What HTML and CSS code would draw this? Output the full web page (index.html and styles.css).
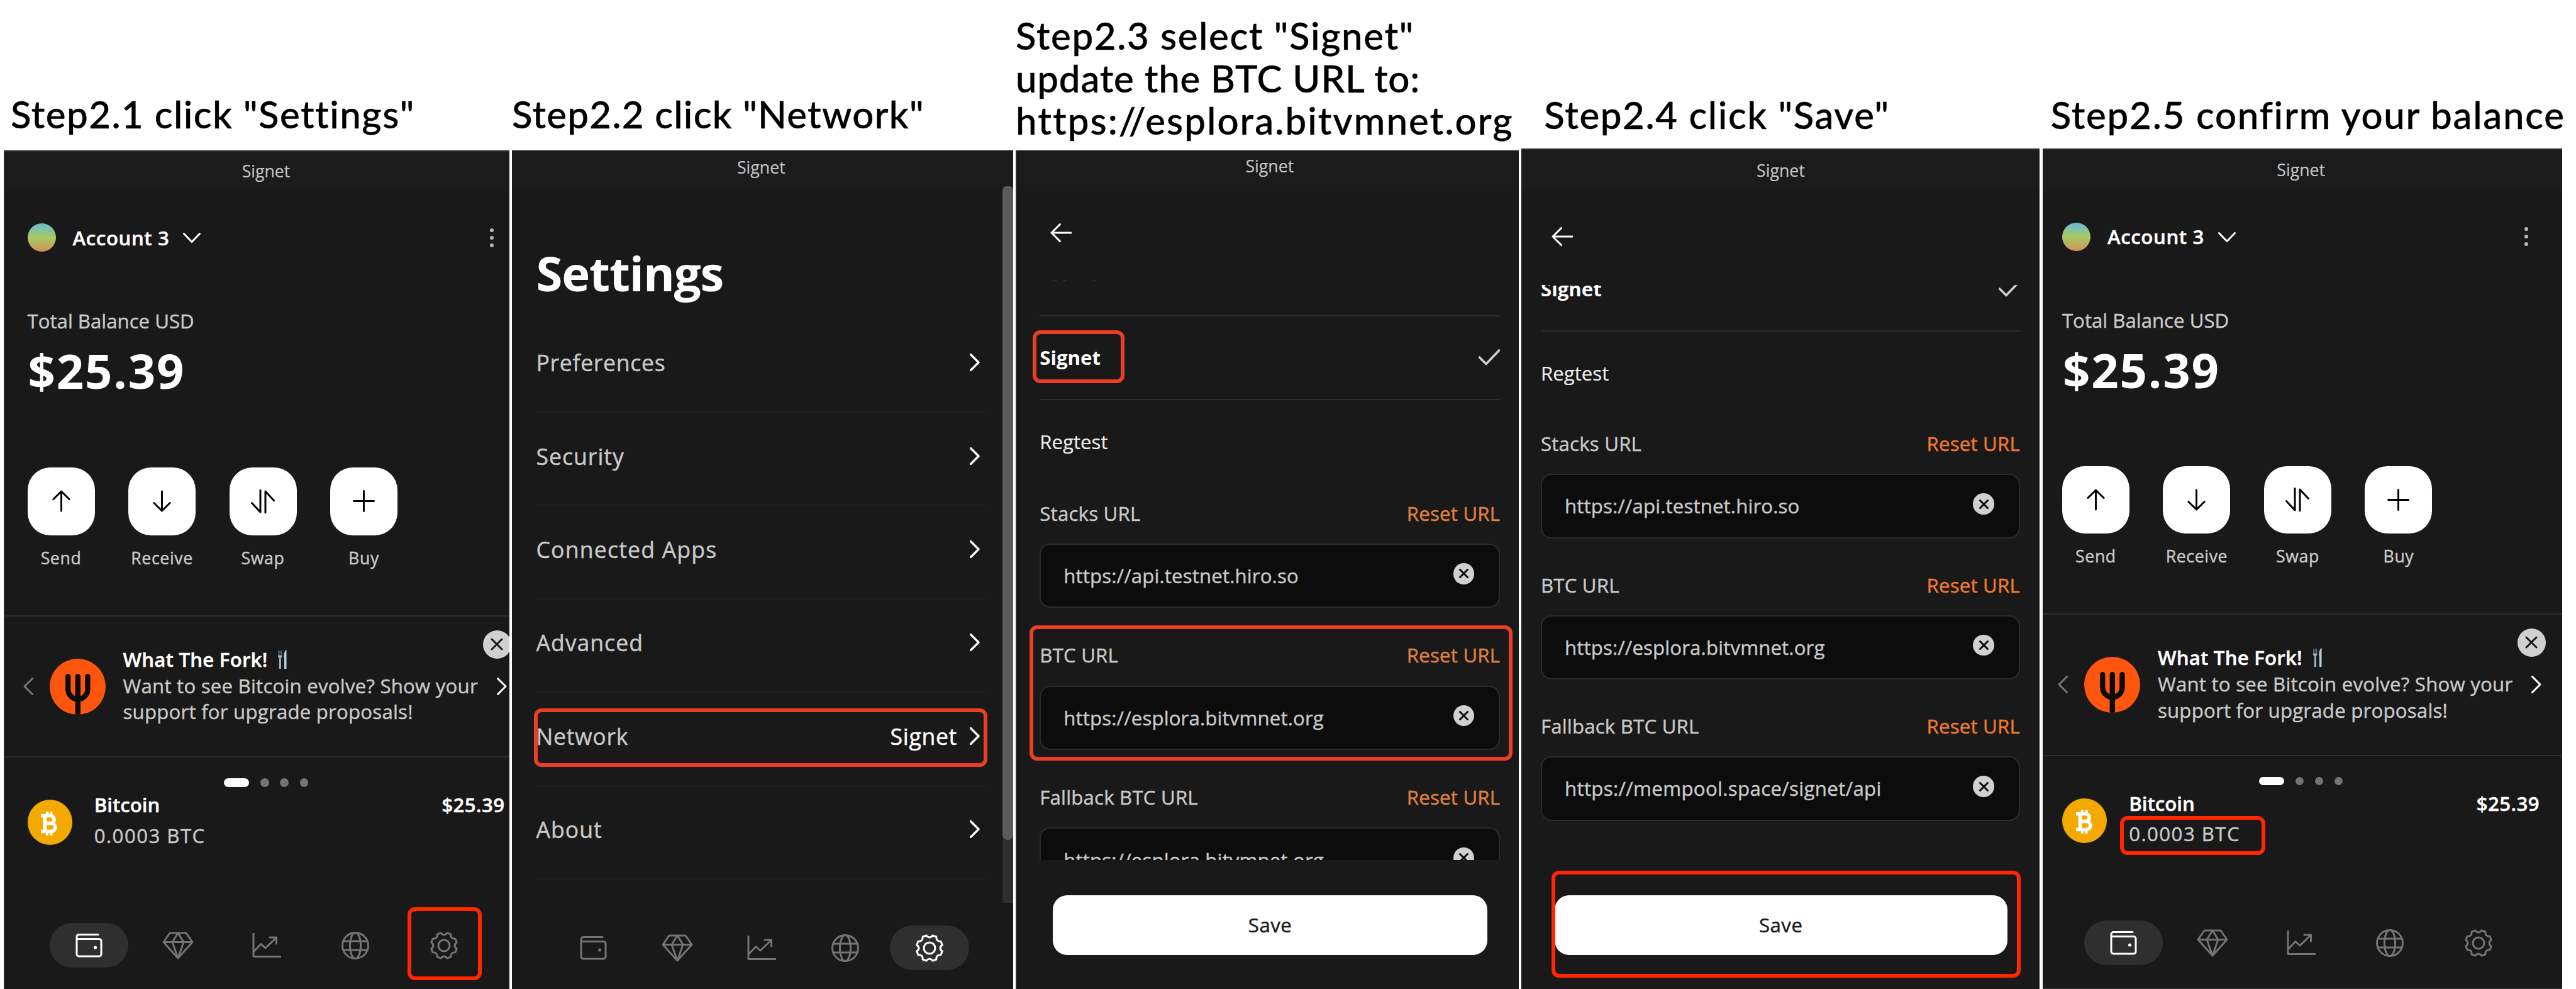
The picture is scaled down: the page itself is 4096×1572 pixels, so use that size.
FILE: index.html
```html
<!DOCTYPE html>
<html lang="en">
<head>
<meta charset="utf-8">
<title>Wallet network setup</title>
<link rel="stylesheet" href="styles.css">
</head>
<body>
<svg class="sprite" aria-hidden="true">
  <symbol id="i-wallet" viewBox="0 0 43 38"><path d="M36 2H5.5A3.5 3.5 0 0 0 2 5.500V33A3.500 3.500 0 0 0 5.500 36.500H37.500A3.500 3.500 0 0 0 41 33V12.500A3.500 3.500 0 0 0 37.500 9H2"/><circle class="solid" cx="31.500" cy="22.500" r="2.600"/></symbol>
  <symbol id="i-gem" viewBox="0 0 50 44"><path d="M12 2H38L48 16.500L25 42L2 16.500ZM2 16.500H48M25 2L16 16.500L25 42L34 16.500Z"/></symbol>
  <symbol id="i-chart" viewBox="0 0 46 40"><path d="M2 1V37.500H45M3 29L14 17.500L21 24L38 7.500M28 7H38.500V17"/></symbol>
  <symbol id="i-globe" viewBox="-23 -23 46 46"><circle r="20.500"/><ellipse rx="8.600" ry="20.500"/><path d="M-19 -7H19M-19 7H19"/></symbol>
  <symbol id="i-gear" viewBox="-23 -23 46 46"><path d="M20.200 5L18 10.800Q10.400 10.400 10.800 18L5 20.200Q0 13.800 -5 20.200L-10.800 18Q-10.400 10.400 -18 10.800L-20.200 5Q-13.800 0 -20.200 -5L-18 -10.800Q-10.400 -10.400 -10.800 -18L-5 -20.200Q0 -13.800 5 -20.200L10.800 -18Q10.400 -10.400 18 -10.800L20.200 -5Q13.800 0 20.200 5Z"/><circle r="9"/></symbol>
  <symbol id="i-up" viewBox="0 0 36 36"><path d="M18 34V2M5 15L18 2L31 15"/></symbol>
  <symbol id="i-down" viewBox="0 0 36 36"><path d="M18 2V34M5 21L18 34L31 21"/></symbol>
  <symbol id="i-swap" viewBox="0 0 38 38"><path d="M15 1V36L1.500 21.500M23 37V3L36.500 17.500"/></symbol>
  <symbol id="i-plus" viewBox="0 0 36 36"><path d="M18 1.500V34.500M1.500 18H34.500"/></symbol>
  <symbol id="i-right" viewBox="0 0 16 28"><path d="M1.500 1.500L14 14L1.500 26.500"/></symbol>
  <symbol id="i-left" viewBox="0 0 16 28"><path d="M14.500 1.500L2 14L14.500 26.500"/></symbol>
  <symbol id="i-chev" viewBox="0 0 28 17"><path d="M1.500 1.500L14 14.500L26.500 1.500"/></symbol>
  <symbol id="i-back" viewBox="0 0 34 30"><path d="M33 15H2M15.500 1.500L2 15L15.500 28.500"/></symbol>
  <symbol id="i-check" viewBox="0 0 34 26"><path d="M1.500 13L12 23.500L32.500 2"/></symbol>
  <symbol id="i-x" viewBox="0 0 20 20"><path d="M2 2L18 18M18 2L2 18"/></symbol>
  <symbol id="i-btc" viewBox="0 0 28 40"><path d="M0 7.500H15A5.800 5.800 0 0 1 15 19.500H7.500M15 19.500H17.500A6.600 6.600 0 0 1 17.500 32.500H0M6.500 7.500V32.500"/><path class="tick" d="M10 1V7M16.500 1V7M10 33V39M16.500 33V39"/></symbol>
  <symbol id="i-fork" viewBox="0 0 90 90"><path d="M29.500 28.500V49A15.800 16 0 0 0 61.100 49V28.500M45.300 28.500V94"/></symbol>
  <symbol id="i-cutlery" viewBox="0 0 15 31"><path fill="#5f6c76" d="M0 1h1.200v7h1.200V1h1.400v7H5V1h1.300v9H0z"/><path fill="#9db6c6" d="M0 9h6.300v1c0 1.500-.8 2.200-1.600 2.600L5 30H1.800L2 12.600C1 12 0 11.500 0 10z"/><path fill="#b9cfdc" d="M10 30V14L9.500 12C9 7 10.500 1 13.500 0V30z"/></symbol>
</svg>

<main class="board">
  <section class="step step-1">
    <h2 class="caption"><span>Step2.1 click "Settings"</span></h2>
    <div class="panel">
      <div class="net"><span>Signet</span></div>
      <div class="home">
        <div class="account"><i class="avatar"></i><b>Account 3</b><svg class="ic chev"><use href="#i-chev"/></svg><span class="kebab"><i></i><i></i><i></i></span></div>
        <div class="label">Total Balance USD</div>
        <div class="amount">$25.39</div>
        <div class="actions">
          <div class="action"><span class="tile"><svg class="ic"><use href="#i-up"/></svg></span>Send</div>
          <div class="action"><span class="tile"><svg class="ic"><use href="#i-down"/></svg></span>Receive</div>
          <div class="action"><span class="tile"><svg class="ic swap"><use href="#i-swap"/></svg></span>Swap</div>
          <div class="action"><span class="tile"><svg class="ic"><use href="#i-plus"/></svg></span>Buy</div>
        </div>
      </div>
      <div class="promo">
        <div class="promo-in">
          <svg class="ic prev"><use href="#i-left"/></svg>
          <span class="fork"><svg><use href="#i-fork"/></svg></span>
          <div class="promo-text"><b>What The Fork!<svg class="cutlery"><use href="#i-cutlery"/></svg></b><br>Want to see Bitcoin evolve? Show your<br>support for upgrade proposals!</div>
          <svg class="ic next"><use href="#i-right"/></svg>
          <span class="close"><svg class="ic"><use href="#i-x"/></svg></span>
        </div>
      </div>
      <div class="home">
        <div class="dots"><i class="on"></i><i></i><i></i><i></i></div>
        <div class="coin"><span class="btc"><svg class="ic"><use href="#i-btc"/></svg></span><div class="coin-name"><b>Bitcoin</b><br><span class="qty">0.0003 BTC</span></div><b class="fiat">$25.39</b></div>
        <nav class="nav">
          <span class="tab on"><svg class="ic wallet"><use href="#i-wallet"/></svg></span>
          <span class="tab"><svg class="ic gem"><use href="#i-gem"/></svg></span>
          <span class="tab"><svg class="ic chart"><use href="#i-chart"/></svg></span>
          <span class="tab"><svg class="ic"><use href="#i-globe"/></svg></span>
          <span class="tab"><svg class="ic"><use href="#i-gear"/></svg></span>
        </nav>
      </div>
      <i class="mark mark-gear"></i>
    </div>
  </section>

  <section class="step step-2">
    <h2 class="caption"><span>Step2.2 click "Network"</span></h2>
    <div class="panel">
      <div class="net"><span>Signet</span></div>
      <div class="scroller">
        <div class="menu">
          <h1>Settings</h1>
          <div class="item">Preferences<svg class="ic"><use href="#i-right"/></svg></div>
          <div class="item">Security<svg class="ic"><use href="#i-right"/></svg></div>
          <div class="item">Connected Apps<svg class="ic"><use href="#i-right"/></svg></div>
          <div class="item">Advanced<svg class="ic"><use href="#i-right"/></svg></div>
          <div class="item">Network<span class="value">Signet</span><svg class="ic"><use href="#i-right"/></svg></div>
          <div class="item">About<svg class="ic"><use href="#i-right"/></svg></div>
        </div>
        <div class="bar"><i></i></div>
      </div>
      <nav class="nav">
        <span class="tab"><svg class="ic wallet"><use href="#i-wallet"/></svg></span>
        <span class="tab"><svg class="ic gem"><use href="#i-gem"/></svg></span>
        <span class="tab"><svg class="ic chart"><use href="#i-chart"/></svg></span>
        <span class="tab"><svg class="ic"><use href="#i-globe"/></svg></span>
        <span class="tab on"><svg class="ic"><use href="#i-gear"/></svg></span>
      </nav>
      <i class="mark mark-network"></i>
    </div>
  </section>

  <section class="step step-3">
    <h2 class="caption"><span>Step2.3 select "Signet"</span><span class="l2">update the BTC URL to:</span><span class="l3">https://esplora.bitvmnet.org</span></h2>
    <div class="panel">
      <div class="net"><span>Signet</span></div>
      <svg class="ic back"><use href="#i-back"/></svg>
      <div class="form">
        <div class="tail"><i></i><i></i><i></i></div>
        <div class="opt sel">Signet<svg class="ic"><use href="#i-check"/></svg></div>
        <div class="opt last">Regtest</div>
        <div class="field"><div class="head">Stacks URL<a>Reset URL</a></div><div class="input">https://api.testnet.hiro.so<span class="clear"><svg class="ic"><use href="#i-x"/></svg></span></div></div>
        <div class="field"><div class="head">BTC URL<a>Reset URL</a></div><div class="input">https://esplora.bitvmnet.org<span class="clear"><svg class="ic"><use href="#i-x"/></svg></span></div></div>
        <div class="field"><div class="head">Fallback BTC URL<a>Reset URL</a></div><div class="input">https://esplora.bitvmnet.org<span class="clear"><svg class="ic"><use href="#i-x"/></svg></span></div></div>
      </div>
      <div class="save">Save</div>
      <i class="mark mark-signet"></i>
      <i class="mark mark-btc"></i>
    </div>
  </section>

  <section class="step step-4">
    <h2 class="caption"><span>Step2.4 click "Save"</span></h2>
    <div class="panel">
      <div class="net"><span>Signet</span></div>
      <svg class="ic back"><use href="#i-back"/></svg>
      <div class="form">
        <div class="opt sel">Signet<svg class="ic"><use href="#i-check"/></svg></div>
        <div class="opt last">Regtest</div>
        <div class="field"><div class="head">Stacks URL<a>Reset URL</a></div><div class="input">https://api.testnet.hiro.so<span class="clear"><svg class="ic"><use href="#i-x"/></svg></span></div></div>
        <div class="field"><div class="head">BTC URL<a>Reset URL</a></div><div class="input">https://esplora.bitvmnet.org<span class="clear"><svg class="ic"><use href="#i-x"/></svg></span></div></div>
        <div class="field"><div class="head">Fallback BTC URL<a>Reset URL</a></div><div class="input wide">https://mempool.space/signet/api<span class="clear"><svg class="ic"><use href="#i-x"/></svg></span></div></div>
      </div>
      <div class="save">Save</div>
      <i class="mark mark-save"></i>
    </div>
  </section>

  <section class="step step-5">
    <h2 class="caption"><span>Step2.5 confirm your balance</span></h2>
    <div class="panel">
      <div class="net"><span>Signet</span></div>
      <div class="home">
        <div class="account"><i class="avatar"></i><b>Account 3</b><svg class="ic chev"><use href="#i-chev"/></svg><span class="kebab"><i></i><i></i><i></i></span></div>
        <div class="label">Total Balance USD</div>
        <div class="amount">$25.39</div>
        <div class="actions">
          <div class="action"><span class="tile"><svg class="ic"><use href="#i-up"/></svg></span>Send</div>
          <div class="action"><span class="tile"><svg class="ic"><use href="#i-down"/></svg></span>Receive</div>
          <div class="action"><span class="tile"><svg class="ic swap"><use href="#i-swap"/></svg></span>Swap</div>
          <div class="action"><span class="tile"><svg class="ic"><use href="#i-plus"/></svg></span>Buy</div>
        </div>
      </div>
      <div class="promo">
        <div class="promo-in">
          <svg class="ic prev"><use href="#i-left"/></svg>
          <span class="fork"><svg><use href="#i-fork"/></svg></span>
          <div class="promo-text"><b>What The Fork!<svg class="cutlery"><use href="#i-cutlery"/></svg></b><br>Want to see Bitcoin evolve? Show your<br>support for upgrade proposals!</div>
          <svg class="ic next"><use href="#i-right"/></svg>
          <span class="close"><svg class="ic"><use href="#i-x"/></svg></span>
        </div>
      </div>
      <div class="home">
        <div class="dots"><i class="on"></i><i></i><i></i><i></i></div>
        <div class="coin"><span class="btc"><svg class="ic"><use href="#i-btc"/></svg></span><div class="coin-name"><b>Bitcoin</b><br><span class="qty">0.0003 BTC</span></div><b class="fiat">$25.39</b></div>
        <nav class="nav">
          <span class="tab on"><svg class="ic wallet"><use href="#i-wallet"/></svg></span>
          <span class="tab"><svg class="ic gem"><use href="#i-gem"/></svg></span>
          <span class="tab"><svg class="ic chart"><use href="#i-chart"/></svg></span>
          <span class="tab"><svg class="ic"><use href="#i-globe"/></svg></span>
          <span class="tab"><svg class="ic"><use href="#i-gear"/></svg></span>
        </nav>
      </div>
      <i class="mark mark-qty"></i>
    </div>
  </section>
</main>
</body>
</html>
```
FILE: styles.css
```css
* { box-sizing: border-box; }
html, body { margin: 0; height: 1572px; overflow: hidden; background: #fff; }
body { font-family: "Open Sans", "Noto Sans", sans-serif; font-size: 31.2px; color: #c9c9c9; -webkit-text-stroke: .45px currentColor; }
.sprite { position: absolute; width: 0; height: 0; }
i { display: block; font-style: normal; }
b { font-weight: 600; color: #fff; }

.ic { display: block; flex: none; fill: none; stroke: currentColor; stroke-width: 3; stroke-linecap: round; stroke-linejoin: round; }
.solid { fill: currentColor; stroke: none; }

/* Board: five captioned screens side by side */
.board { display: flex; width: 4096px; height: 1572px; padding-left: 6px; }
.step { --pad: 35.5px; --top: 238.5px; flex: none; height: 1572px; display: flex; flex-direction: column; }
.step-1 { width: 804px; margin-right: 4px; --net: 61.2px; }
.step-2 { width: 796.6px; margin-right: 4.4px; --net: 57.2px; }
.step-3 { width: 799.7px; margin-right: 4.7px; --net: 55.2px; }
.step-4 { width: 824.1px; margin-right: 4.3px; --top: 236px; --net: 62.8px; }
.step-5 { width: 825.8px; --top: 236px; --net: 62px; --pad: 31.2px; }

.caption { flex: none; height: var(--top); margin: 0; display: flex; flex-direction: column; justify-content: flex-end;
  font: 500 60px/67.4px "Lato", "Open Sans", sans-serif; letter-spacing: 1.6px; color: #000; white-space: nowrap; -webkit-text-stroke: .4px #000; }
.caption span { display: block; }
.step-1 .caption { padding: 0 0 23px 11px; letter-spacing: 1.45px; }
.step-2 .caption { padding: 0 0 23px 0; letter-spacing: 1.25px; }
.step-3 .caption { padding: 0 0 13px 0; }
.step-4 .caption { padding: 0 0 20px 36px; }
.step-5 .caption { padding: 0 0 20px 13px; letter-spacing: 1.75px; }
.step-3 .caption .l2 { letter-spacing: .8px; }
.step-3 .caption .l3 { letter-spacing: 2.05px; }

.panel { position: relative; flex: 1; min-height: 0; background: #191919; overflow: hidden; }
.step-1 .panel { border: 2px solid #2c2c2e; border-width: 2px 0 0 2px; }
.step-3 .panel { border-left: 2px solid #2c2c2e; }
.step-4 .panel { border-top: 2px solid #2e2e2e; }
.step-5 .panel { border: 2px solid #2e2e2e; border-width: 2px 0; }

.net { height: var(--net); display: flex; align-items: flex-end; justify-content: center; overflow: hidden; background: #1b1b1b; font-size: 26.7px; color: #c4c4c4; -webkit-text-stroke-width: .2px; }
.net span { flex: none; line-height: 61px; }
.step-1 .net { padding-left: 28px; }
.step-2 .net { padding-right: 4px; }
.step-3 .net { padding-left: 6px; }
.step-5 .net { padding-right: 4px; }

/* Home screen */
.home { width: 759px; margin-left: var(--pad); }
.account { display: flex; align-items: center; height: 45px; margin-top: 53.6px; }
.avatar { width: 45px; height: 45px; border-radius: 50%; background: linear-gradient(#63bcd6, #a9cb62 50%, #d18f5e); }
.account b { margin-left: 27px; letter-spacing: .6px; }
.chev { width: 28px; height: 17px; margin: 2px 0 0 22px; color: #fff; }
.kebab { margin-left: auto; margin-right: 18px; display: flex; flex-direction: column; gap: 5.8px; }
.kebab i { width: 6px; height: 6px; border-radius: 50%; background: #b8b8b8; }
.label { margin-top: 90px; line-height: 40px; }
.amount { margin: 11px 0 0 1px; line-height: 96px; font-size: 76px; font-weight: 700; letter-spacing: 1.8px; color: #fff; -webkit-text-stroke-width: 0; }
.actions { display: flex; gap: 53.5px; margin-top: 106px; }
.step-5 .actions { margin-top: 105px; }
.action { width: 107px; display: flex; flex-direction: column; align-items: center; gap: 18px; font-size: 26.7px; line-height: 36px; letter-spacing: .6px; }
.tile { width: 107px; height: 107.4px; border-radius: 36px; background: #fff; color: #000; display: flex; align-items: center; justify-content: center; }
.tile .ic { width: 35px; height: 35px; }
.tile .ic.swap { width: 38px; height: 38px; }

.promo { height: 226.8px; margin-top: 73px; border: 2px solid #2e2e2e; border-width: 2px 0; }
.promo-in { position: relative; display: flex; align-items: center; width: 769px; height: 100%; margin-left: calc(var(--pad) - 7px); }
.prev, .next { width: 16px; height: 28px; }
.prev { color: #777; margin-right: 26.5px; }
.next { color: #fff; margin-left: auto; }
.fork { flex: none; width: 89px; height: 89px; border-radius: 50%; background: #ff560f; overflow: hidden; margin-right: 27.5px; }
.fork svg { display: block; width: 89px; height: 89px; fill: none; stroke: #0c0c0c; stroke-width: 8.5; stroke-linecap: round; }
.promo-text { line-height: 41.6px; margin-top: -1px; white-space: nowrap; letter-spacing: .22px; }
.cutlery { width: 15px; height: 31px; margin-left: 17px; vertical-align: -4px; }
.promo-text b { display: inline-block; height: 41.6px; }
.close { position: absolute; left: 731px; top: 22px; width: 45px; height: 45px; border-radius: 50%; background: #d0d0d0; color: #191919; display: flex; align-items: center; justify-content: center; }
.close .ic { width: 20px; height: 20px; }

.dots { display: flex; justify-content: center; gap: 17.8px; margin-top: 33px; }
.dots i { width: 13.4px; height: 13.4px; border-radius: 7px; background: #747474; }
.dots .on { width: 40.3px; background: #fff; }
.coin { display: flex; height: 71.5px; margin-top: 20.5px; line-height: 48.6px; }
.btc { width: 71.2px; height: 71.5px; border-radius: 50%; background: #f3a900; color: #fff; display: flex; align-items: center; justify-content: center; }
.btc .ic { width: 28px; height: 40px; margin-top: 3px; stroke-width: 5.6; stroke-linejoin: miter; stroke-linecap: butt; }
.tick { stroke-width: 4; }
.coin-name { margin: -16px 0 0 35px; }
.qty { letter-spacing: 1.45px; }
.fiat { margin: -16px 0 0 auto; letter-spacing: .4px; }

.nav { display: flex; gap: 16px; margin: 123.9px 0 0 35.5px; color: #747474; }
.step-5 .nav { margin-top: 122.7px; }
.tab { flex: none; width: 125px; height: 71.5px; border-radius: 36px; display: flex; align-items: center; justify-content: center; }
.tab.on { background: #2f2f2f; color: #fff; }
.tab .ic { width: 46px; height: 46px; }
.tab .wallet { width: 43px; height: 39px; }
.tab .gem { width: 50px; height: 44px; }
.tab .chart { width: 46px; height: 40px; }

/* Settings menu */
.scroller { display: flex; height: 1139.3px; overflow: hidden; }
.menu { width: 715.5px; margin-left: 38.5px; }
.menu h1 { margin: 90.3px 0 25.6px; font-size: 76px; line-height: 96px; font-weight: 700; letter-spacing: -1.1px; color: #fff; -webkit-text-stroke-width: 0; }
.item { display: flex; align-items: center; height: 148.4px; padding: 0 10px 9px 0; border-bottom: 2px solid #202020; font-size: 35.6px; letter-spacing: 1px; }
.item:nth-child(2) { letter-spacing: .7px; }
.item:nth-child(4) { letter-spacing: 1.2px; }
.item:nth-child(6) { letter-spacing: .7px; }
.item .ic { width: 16px; height: 28px; margin-left: auto; color: #fff; stroke-width: 3.4; }
.item .value { margin-left: auto; color: #fff; }
.item .value + .ic { margin-left: 20px; }
.bar { width: 16.5px; margin-left: auto; background: #2e2e2e; }
.bar i { height: 1039.3px; border-radius: 8px; background: #5b5b5b; }
.step-2 .nav { gap: 7.5px; margin: 36px 0 0 66.5px; }
.step-2 .tab { width: 126px; }

/* Network form */
.back { width: 34px; height: 30px; margin: 61.3px 0 61px 53px; color: #fff; }
.step-4 .back { margin: 60.5px 0 62px 47.3px; }
.form { width: 732px; height: 921px; margin-left: 36.3px; overflow: hidden; }
.step-4 .form { width: 762px; height: 913px; margin-left: 30.6px; }
.tail { display: flex; height: 56.7px; padding-left: 21px; border-bottom: 2px solid #2e2e30; }
.tail i { width: 5.7px; height: 1px; margin-right: 10px; background: #4a4a4a; }
.tail i:last-child { margin-left: 32px; }
.opt { display: flex; align-items: center; justify-content: space-between; height: 133.5px; padding-bottom: 0; border-bottom: 2px solid #2e2e30; color: #ededed; -webkit-text-stroke-width: .2px; }
.opt.sel { font-weight: 700; color: #fff; -webkit-text-stroke-width: 0; }
.opt.last { border-color: transparent; }
.opt .ic { width: 34px; height: 26px; color: #d0d0d0; stroke-width: 3.6; }
.step-4 .opt.sel { margin-top: -60px; }
.field { height: 225.8px; padding-top: 25.9px; }
.head { display: flex; justify-content: space-between; line-height: 40px; letter-spacing: .2px; }
.head a { color: #e0803f; }
.input { display: flex; align-items: center; justify-content: space-between; height: 102.4px; margin-top: 28.3px; padding: 0 39px 0 36px; border: 2px solid #282b32; border-radius: 17px; background: #0c0c0c; letter-spacing: .14px; }
.input.wide { letter-spacing: .35px; }
.clear { width: 33.5px; height: 33.5px; margin-bottom: 6.5px; border-radius: 50%; background: #d0d0d0; color: #0c0c0c; display: flex; align-items: center; justify-content: center; }
.clear .ic { width: 15px; height: 15px; stroke-width: 4; }
.step-4 .field { height: 224.5px; padding-top: 25.2px; }
.step-4 .head a { color: #f07a2e; }
.step-4 .input { margin-top: 27.8px; }
.save { width: 691.6px; height: 95px; margin: 56px 0 0 56.8px; border-radius: 23px; background: #fff; color: #1a1a1a; display: flex; align-items: center; justify-content: center; letter-spacing: .5px; font-weight: 500; }
.step-4 .save { width: 720.2px; margin: 56.6px 0 0 52.2px; }

/* Red outlines laid over the screens */
.mark { position: absolute; border: 6.6px solid #eb3f25; border-radius: 12px; }
.mark-gear { left: 640px; top: 1201px; width: 117.5px; height: 116px; border-color: #ff2600; }
.mark-network { left: 34.7px; top: 887.2px; width: 721px; height: 93px; }
.mark-signet { left: 24.7px; top: 286px; width: 146.5px; height: 84.5px; }
.mark-btc { left: 20.5px; top: 755px; width: 767.6px; height: 215.4px; }
.mark-save { left: 47.2px; top: 1146.4px; width: 746.6px; height: 169.7px; border-color: #ff2600; }
.mark-qty { left: 123.2px; top: 1059.2px; width: 231.2px; height: 62px; border-color: #ff2600; }
```
